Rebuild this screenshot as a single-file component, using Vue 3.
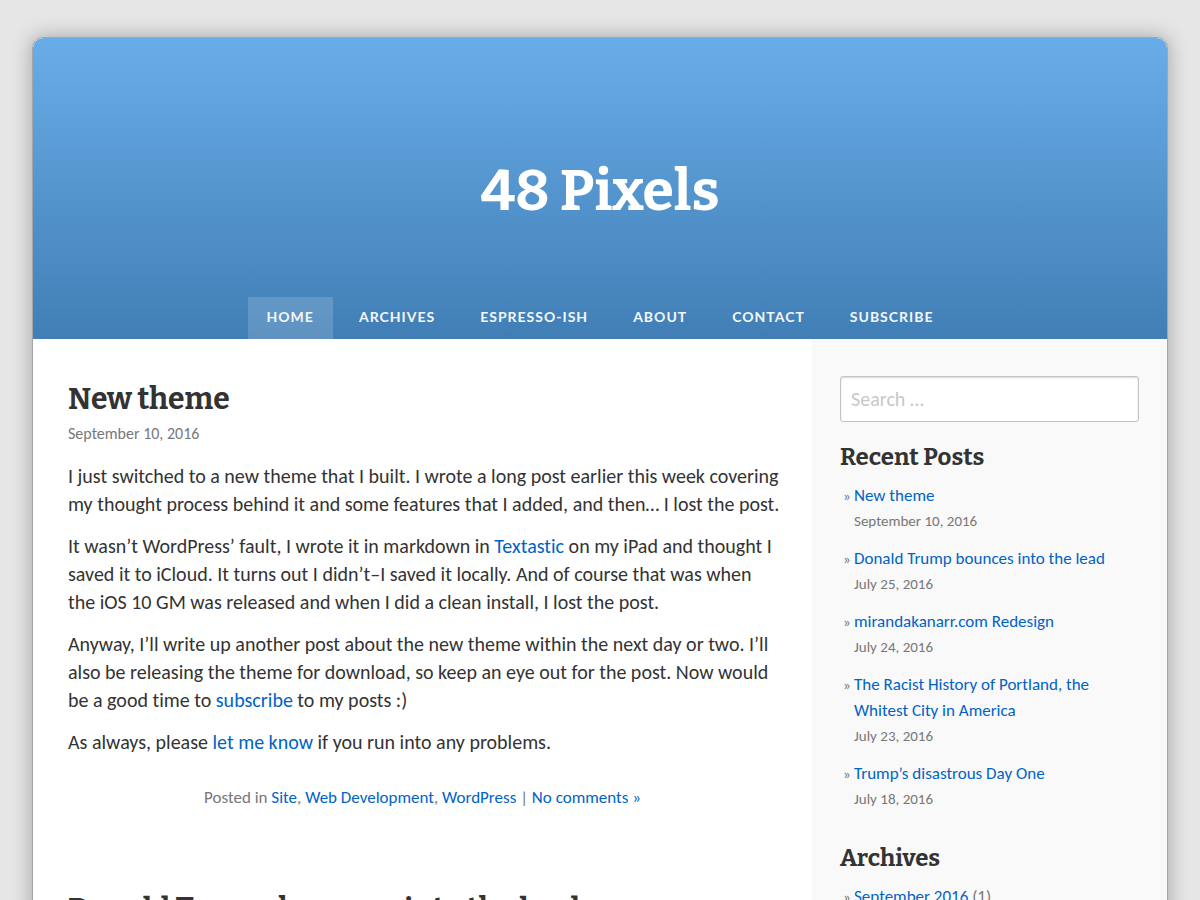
<script setup>
const nav = ['Home', 'Archives', 'Espresso-ish', 'About', 'Contact', 'Subscribe']
const posts = [
  { title: 'New theme', date: 'September 10, 2016' },
  { title: 'Donald Trump bounces into the lead', date: 'July 25, 2016' },
  { title: 'mirandakanarr.com Redesign', date: 'July 24, 2016' },
  { title: 'The Racist History of Portland, the Whitest City in America', date: 'July 23, 2016' },
  { title: 'Trump’s disastrous Day One', date: 'July 18, 2016' }
]
</script>

<template>
  <div class="page">
    <header class="masthead">
      <h1 class="site-title">48 Pixels</h1>
      <nav class="menu">
        <a v-for="(item, i) in nav" :key="item" href="#" :class="{ current: i === 0 }">{{ item }}</a>
      </nav>
    </header>
    <div class="columns">
      <main class="content">
        <article class="post">
          <h2>New theme</h2>
          <p class="date">September 10, 2016</p>
          <p>I just switched to a new theme that I built. I wrote a long post earlier this week covering my thought process behind it and some features that I added, and then… I lost the post.</p>
          <p>It wasn’t WordPress’ fault, I wrote it in markdown in <a href="#">Textastic</a> on my iPad and thought I saved it to iCloud. It turns out I didn’t–I saved it locally. And of course that was when the&nbsp;iOS&nbsp;10 GM was released and when I did a clean install, I lost the post.</p>
          <p>Anyway, I’ll write up another post about the new theme within the next day or two. I’ll also be releasing the theme for download, so keep an eye out for the post. Now would be&nbsp;a good time to <a href="#">subscribe</a> to my posts :)</p>
          <p>As always, please <a href="#">let me know</a> if you run into any problems.</p>
          <footer class="meta">Posted in <a href="#">Site</a>, <a href="#">Web Development</a>, <a href="#">WordPress</a> | <a href="#">No comments »</a></footer>
        </article>
        <article class="post">
          <h2>Donald Trump bounces into the lead</h2>
        </article>
      </main>
      <aside class="sidebar">
        <form role="search" @submit.prevent>
          <input class="search" type="search" aria-label="Search" placeholder="Search …">
        </form>
        <section class="widget">
          <h3>Recent Posts</h3>
          <ul class="recent">
            <li v-for="post in posts" :key="post.title">
              <a href="#">{{ post.title }}</a>
              <span class="post-date">{{ post.date }}</span>
            </li>
          </ul>
        </section>
        <section class="widget">
          <h3>Archives</h3>
          <ul>
            <li><a href="#">September 2016</a> (1)</li>
          </ul>
        </section>
      </aside>
    </div>
  </div>
</template>

<style>
html {
  height: 100%;
  overflow: hidden;
  background: #e6e6e6;
}
body {
  height: 100%;
  overflow: hidden;
}
</style>

<style scoped>
.page {
  margin: 37px 32px 0;
  border: 1px solid #a3a5a8;
  border-radius: 11px 11px 0 0;
  overflow: hidden;
  background: #fff;
  box-shadow: 0 0 20px rgba(0, 0, 0, 0.3);
  color: #333;
  font-family: Carlito, Lato, sans-serif;
  font-size: 20px;
  font-variant-ligatures: none;
  line-height: 28px;
}
a {
  color: #0063c6;
  text-decoration: none;
}
h1,
h2,
h3 {
  margin: 0;
  font-family: "Roboto Slab", Bitter, "Noto Serif", serif;
  font-weight: 700;
}
.masthead {
  display: flex;
  flex-direction: column;
  min-height: 301px;
  border-radius: 10px 10px 0 0;
  background: linear-gradient(#69ade8, #417eb6);
}
.site-title {
  padding-top: 117px;
  color: #fff;
  font-size: 57px;
  line-height: 72px;
  text-align: center;
}
.menu {
  display: flex;
  justify-content: center;
  gap: 7px;
  margin-top: auto;
}
.menu a {
  padding: 0 19px 2px;
  color: #f4f8fb;
  font-family: Lato, sans-serif;
  font-size: 14px;
  font-weight: 700;
  line-height: 40px;
  letter-spacing: 1px;
  text-transform: uppercase;
}
.menu .current {
  background: rgba(255, 255, 255, 0.16);
}
.columns {
  display: grid;
  grid-template-columns: minmax(0, 1fr) 355px;
}
.content {
  padding: 39px 28px 39px 35px;
}
.post {
  margin-bottom: 76px;
}
.post h2 {
  font-size: 30px;
  line-height: 42px;
}
.post p {
  margin: 0 0 14px;
}
.post .date {
  color: #777;
  font-size: 16px;
}
.meta {
  padding: 14px 7px 0 0;
  color: #777;
  font-size: 17px;
  text-align: center;
}
.sidebar {
  padding: 37px 28px;
  background: #f9f9f9;
}
.search {
  display: block;
  width: 100%;
  height: 46px;
  box-sizing: border-box;
  margin: 0 0 18px;
  padding: 0 10px;
  border: 1px solid #c3c3c3;
  border-radius: 3px;
  background: #fff;
  box-shadow: inset 0 1px 2px rgba(0, 0, 0, 0.16);
  color: #333;
  font: inherit;
  appearance: none;
}
.search::placeholder {
  color: #c8c8c8;
}
.widget {
  margin-bottom: 29px;
}
.widget h3 {
  margin-bottom: 9px;
  font-size: 24px;
  line-height: 34px;
}
.widget ul {
  margin: 0;
  padding: 0 0 0 14px;
  list-style: none;
  color: #777;
  font-size: 17px;
  line-height: 26px;
}
.widget li {
  margin-bottom: 12px;
}
.widget li::before {
  content: "»";
  display: inline-block;
  width: 11px;
  margin-left: -11px;
  font-size: 15px;
}
.post-date {
  display: block;
  font-size: 15px;
  line-height: 25px;
}
</style>
